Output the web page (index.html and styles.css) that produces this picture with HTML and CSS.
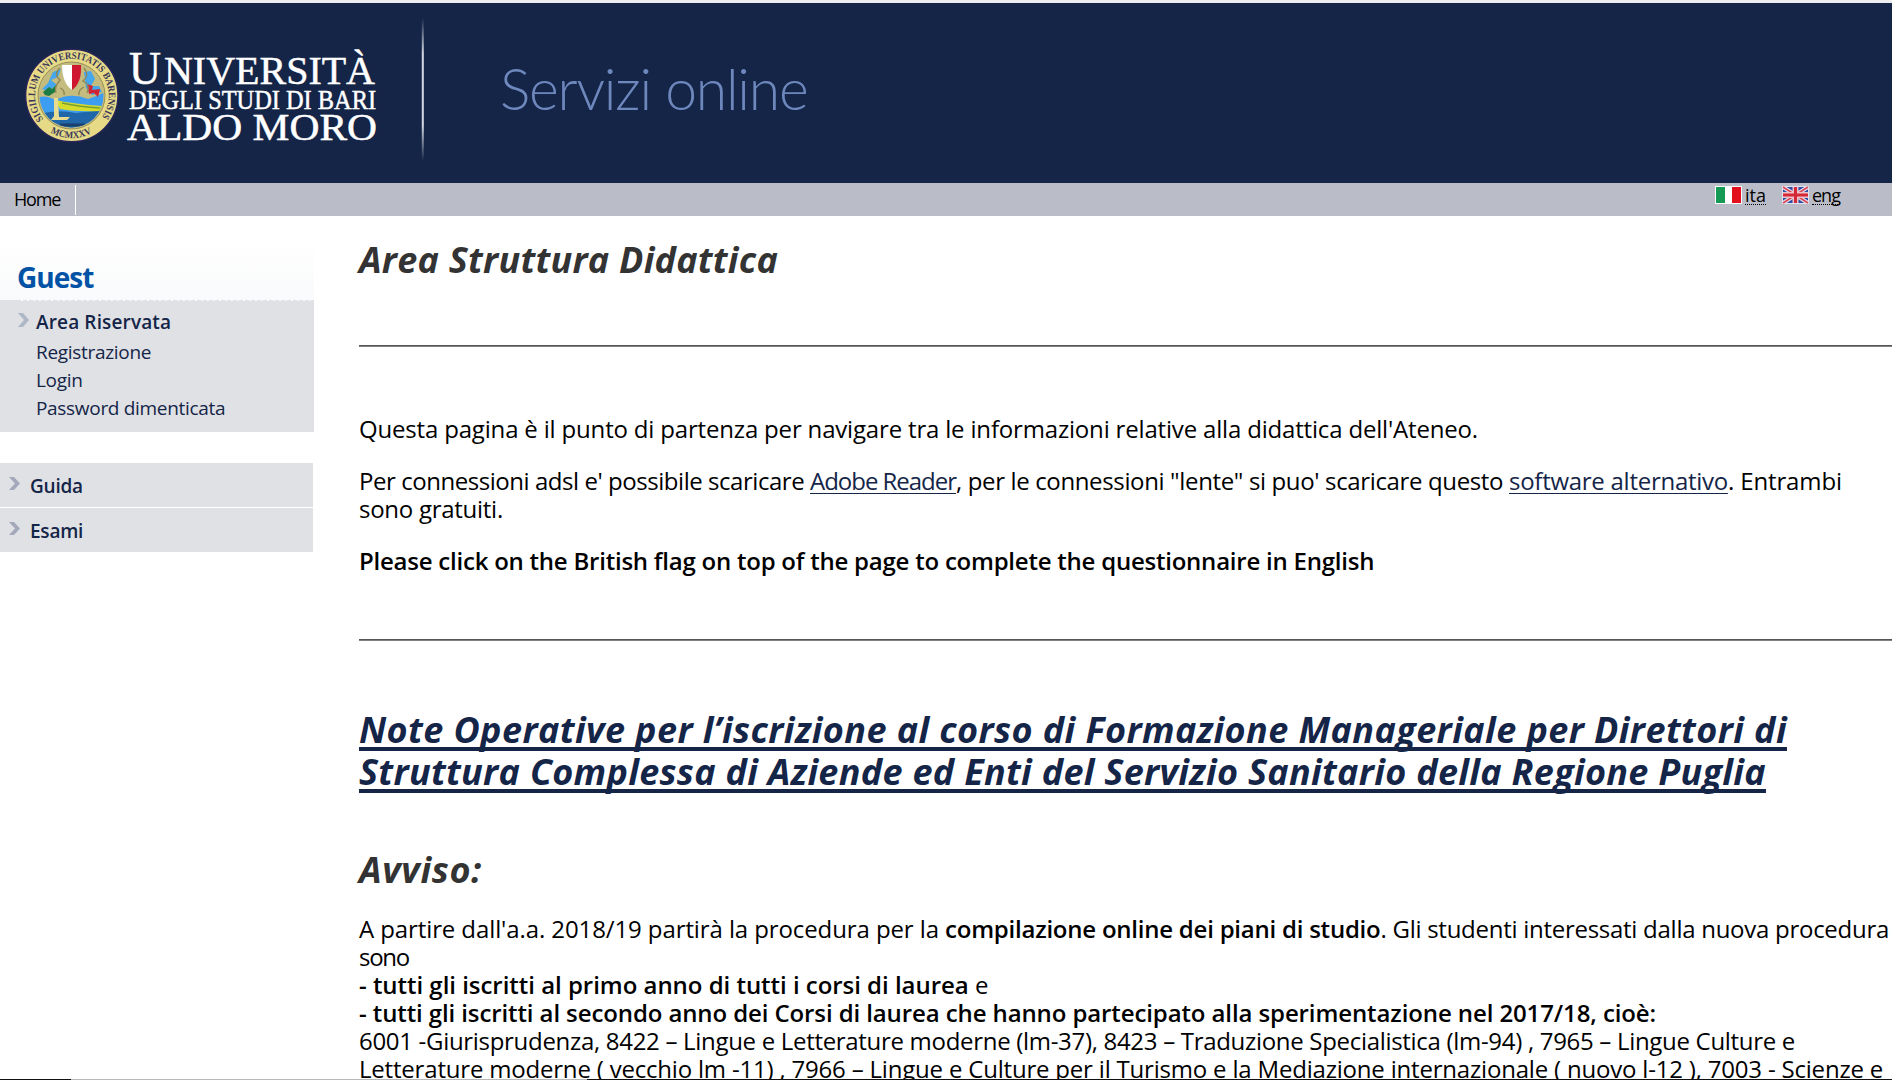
FILE: index.html
```html
<!DOCTYPE html>
<html lang="it">
<head>
<meta charset="utf-8">
<title>Servizi online</title>
<link rel="stylesheet" href="styles.css">
</head>
<body>
<header class="banner">
  <svg class="logo" width="430" height="180" viewBox="0 3 430 180">
    <defs>
      <path id="ring" d="M43.500 119 A36.800 36.800 0 1 1 100.300 119"/>
      <path id="ringBottom" d="M50.500 132.500 A43 43 0 0 0 93.100 132.500"/>
      <linearGradient id="fade" x1="0" y1="0" x2="0" y2="1">
        <stop offset="0" stop-color="#d5d8e0" stop-opacity="0"/>
        <stop offset=".25" stop-color="#d5d8e0"/>
        <stop offset=".75" stop-color="#d5d8e0"/>
        <stop offset="1" stop-color="#d5d8e0" stop-opacity="0"/>
      </linearGradient>
      <clipPath id="disc"><circle cx="71.500" cy="95.500" r="32"/></clipPath>
    </defs>
    <circle cx="71.800" cy="95.500" r="46.200" fill="#e6da86" stroke="#2a2558" stroke-width="1.500"/>
    <circle cx="71.500" cy="95.500" r="33.500" fill="#c4bb7e" stroke="#98905a" stroke-width="1"/>
    <g clip-path="url(#disc)">
      <path d="M39 97 Q48 95 55 100 Q71 92 88 99 Q96 97 105 92 V130 H39Z" fill="#3d9df0"/>
      <path d="M39 114 Q58 109 76 113 L104 110 V130 H39Z" fill="#1f67a8"/>
      <path d="M55 100 Q75 104 102 106 L100 111 Q76 112 60 109Z" fill="#d6dc2b"/>
      <path d="M62 103 Q80 107 100 108" stroke="#779f32" stroke-width="1.500" fill="none"/>
      <path d="M54 98 H58 L59 117 H70 L67 120 H51 L54 116Z" fill="#e8dc92"/>
      <path d="M60 125 H85" stroke="#1b3f6b" stroke-width="3"/>
      <path d="M53 72 L61 69 L58 77 L51 80 L57 85 L48 91 L42 89 L48 83Z M84 72 L91 71 L95 79 L91 86 L99 86 L102 92 L92 95 L86 88Z" fill="#45a7ec"/>
      <path d="M43 92 l6-5 3 2 4-4-1 7-6 4-4-1z" fill="#1d7b46"/>
      <path d="M87 84 l6 2-1 4 8-1-2 8-4-4-5 1z" fill="#cf2436"/>
    </g>
    <path d="M60 68 q-7 6 0 12 q-6 7-4 13 M84 68 q6 7-1 13 q8 4 4 12 M60 88 q5 2 4 7 M84 87 q-6 3-5 8" fill="none" stroke="#8d8554" stroke-width="1.300"/>
    <path d="M62 65 H72 V90 Q62 83 62 65Z" fill="#fff"/>
    <path d="M72 65 H81 Q82 83 72 90Z" fill="#cf1731"/>
    <text class="ring-text"><textPath href="#ring" textLength="163" lengthAdjust="spacingAndGlyphs">SIGILLUM UNIVERSITATIS BARENSIS</textPath></text>
    <text class="ring-text"><textPath href="#ringBottom" textLength="43" lengthAdjust="spacingAndGlyphs">MCMXXV</textPath></text>
    <text class="logo-text" y="84"><tspan x="129" font-size="46" textLength="32" lengthAdjust="spacingAndGlyphs">U</tspan><tspan x="164" font-size="41" textLength="211" lengthAdjust="spacingAndGlyphs">NIVERSITÀ</tspan></text>
    <text class="logo-text" x="129" y="109" font-size="27" textLength="247" lengthAdjust="spacingAndGlyphs">DEGLI STUDI DI BARI</text>
    <text class="logo-text" x="127" y="139.500" font-size="37" textLength="250" lengthAdjust="spacingAndGlyphs">ALDO MORO</text>
    <rect x="421.800" y="18" width="2" height="143" fill="url(#fade)"/>
  </svg>
  <div class="service">Servizi online</div>
</header>
<nav class="menu">
  <a class="home">Home</a>
  <div class="langs">
    <a class="lang"><svg width="27" height="18" viewBox="0 0 27 18"><path fill="#fff" d="M0 0h27v18H0z"/><path fill="#159a55" d="M1 1h9v16H1z"/><path fill="#e2101c" d="M17 1h9v16h-9z"/></svg><abbr>ita</abbr></a>
    <a class="lang eng"><svg width="27" height="18" viewBox="0 0 27 18"><path fill="#dfe3f2" d="M0 0h27v18H0z"/><path fill="#2d4da3" d="M1 1h25v16H1z"/><path d="M1 1l25 16M26 1L1 17" stroke="#e6e0ee" stroke-width="4"/><path d="M1 1l25 16M26 1L1 17" stroke="#dc4450" stroke-width="1.500"/><path d="M13.500 1v16M1 9h25" stroke="#eec0c8" stroke-width="6"/><path d="M13.500 1v16M1 9h25" stroke="#d42a37" stroke-width="3"/></svg><abbr>eng</abbr></a>
  </div>
</nav>
<div class="page">
  <aside class="side">
    <h2 class="guest">Guest</h2>
    <ul class="reserved">
      <li class="head"><svg class="chev" width="12" height="15" viewBox="0 0 12 15"><path d="M0 0h5l6 7-6 7H0l6-7z" fill="#adb7c8"/></svg>Area Riservata</li>
      <li>Registrazione</li>
      <li>Login</li>
      <li>Password dimenticata</li>
    </ul>
    <ul class="sections">
      <li><svg class="chev" width="12" height="14" viewBox="0 0 12 14"><path d="M0 0h5l6 6.500-6 6.500H0l6-6.500z" fill="#a3a9ba"/></svg>Guida</li>
      <li><svg class="chev" width="12" height="14" viewBox="0 0 12 14"><path d="M0 0h5l6 6.500-6 6.500H0l6-6.500z" fill="#a3a9ba"/></svg>Esami</li>
    </ul>
  </aside>
  <main class="content">
    <h1 class="title">Area Struttura Didattica</h1>
    <hr>
    <p class="intro">Questa pagina è il punto di partenza per navigare tra le informazioni relative alla didattica dell'Ateneo.</p>
    <p class="readers"><span class="lead">Per connessioni adsl e' possibile scaricare </span><a class="adobe">Adobe Reader</a><span class="slow">, per le connessioni "lente" si puo' scaricare questo </span><a>software alternativo</a><span class="both">. Entrambi</span><br>sono gratuiti.</p>
    <p class="english"><b>Please click on the British flag on top of the page to complete the questionnaire in English</b></p>
    <hr>
    <h1 class="notes"><a>Note Operative per l’iscrizione al corso di Formazione Manageriale per Direttori di</a><br><a class="second">Struttura Complessa di Aziende ed Enti del Servizio Sanitario della Regione Puglia</a></h1>
    <h1 class="notice">Avviso:</h1>
    <p><span class="from">A partire dall'a.a. 2018/19 partirà la procedura per la </span><b class="plans">compilazione online dei piani di studio</b><span class="students">. Gli studenti interessati dalla nuova procedura</span><br><span class="are">sono</span><br><b class="first-year">- tutti gli iscritti al primo anno di tutti i corsi di laurea </b>e<br><b class="second-year">- tutti gli iscritti al secondo anno dei Corsi di laurea che hanno partecipato alla sperimentazione nel 2017/18, cioè:</b><br><span class="courses">6001 -Giurisprudenza, 8422 – Lingue e Letterature moderne (lm-37), 8423 – Traduzione Specialistica (lm-94) , 7965 – Lingue Culture e</span><br><span class="courses-more">Letterature moderne ( vecchio lm -11) , 7966 – Lingue e Culture per il Turismo e la Mediazione internazionale ( nuovo l-12 ), 7003 - Scienze e</span></p>
  </main>
</div>
<div class="edge"></div>
</body>
</html>
```
FILE: styles.css
```css
* { box-sizing: border-box; }
body { margin: 0; height: 1080px; overflow: hidden; position: relative; background: #fff; color: #000; font-family: "Open Sans", "Noto Sans", sans-serif; white-space: nowrap; }

.banner { height: 183px; border-top: 3px solid #eceef0; background: #142548; display: flex; }
.logo { display: block; flex: none; }
.logo-text { font-family: "Liberation Serif", serif; fill: #fff; stroke: #fff; stroke-width: .5px; }
.ring-text { font: bold 10px "Liberation Serif", serif; fill: #39355a; }
.service { margin-left: 70px; padding-top: 55px; font-family: Lato, sans-serif; font-size: 57px; line-height: 60px; font-weight: 300; letter-spacing: -1.2px; color: #6e88bd; }

.menu { height: 33px; background: #babdc8; display: flex; justify-content: space-between; }
.home { width: 76px; height: 30px; margin-top: 2px; padding-left: 14px; border-right: 1px solid #fff; font-size: 18px; line-height: 28px; letter-spacing: -1.2px; }
.langs { display: flex; gap: 16px; padding: 3px 52px 0 0; }
.lang { display: flex; gap: 3px; font-size: 18px; }
.lang abbr { height: 19px; line-height: 19px; border-bottom: 1px dotted #000; }
.eng abbr { letter-spacing: -.97px; }

.page { display: flex; }
.side { width: 314px; flex: none; }
.guest { margin: 24px 0 0; height: 60px; padding: 18px 0 0 17px; font-size: 28px; line-height: 38px; font-weight: 700; letter-spacing: -.95px; color: #0253a6; background: linear-gradient(#fff, #f9fafb); }
ul { list-style: none; margin: 0; padding: 0; color: #142548; }
.reserved { height: 132px; background: repeating-linear-gradient(90deg, #e0e1e5 0 4px, #fafafa 4px 6px) 17px 0 / 100% 1px no-repeat, #e0e1e5; padding: 8px 0 0 36px; font-size: 19px; line-height: 28px; letter-spacing: -.31px; }
.head { display: flex; margin: 0 0 2px -18px; font-weight: 600; letter-spacing: .14px; }
.head .chev { margin: 5px 6px 0 0; }
.sections { width: 313px; margin-top: 31px; display: grid; gap: 1px; font-size: 19px; font-weight: 600; letter-spacing: -.23px; }
.sections li { height: 44px; display: flex; padding: 8px 0 0 9px; line-height: 30px; background: #e0e1e5; }
.sections .chev { margin: 6px 9px 0 0; }

.content { flex: 1; min-width: 0; padding: 22px 0 0 45px; font-size: 24px; line-height: 28px; letter-spacing: -.27px; }
.content p { margin: 0 0 24px; }
.content b { font-weight: 600; letter-spacing: -.23px; }
.content h1 { margin: 0; font-size: 36px; line-height: 42px; font-weight: 700; font-style: italic; color: #333; }
.content hr { height: 2px; border: 0; margin: 66px 0 68px; background: linear-gradient(#555 50%, #808080 50%); }
.content p + hr { margin: 64px 0 67px; }
.content a { color: #142548; text-decoration: underline 1px; text-underline-offset: 3px; text-decoration-skip-ink: none; }
.content .title { margin-top: 1px; margin-bottom: -2px; letter-spacing: .238px; }
.content .intro { letter-spacing: -.176px; }
.lead { letter-spacing: -.454px; }
.content .adobe { letter-spacing: -1.025px; }
.slow { letter-spacing: -.359px; }
.both { letter-spacing: -.127px; }
.content .notes { padding-top: 1px; }
.content .notes a { letter-spacing: .406px; text-decoration-thickness: 4px; text-underline-offset: 4px; }
.content .notes .second { letter-spacing: .297px; }
.content .notice { margin: 56px 0 24px; letter-spacing: .638px; }
.from { letter-spacing: -.1px; }
.are { letter-spacing: -1.3px; }
.content .first-year { letter-spacing: -.03px; }
.content .second-year { letter-spacing: -.105px; }
.courses { letter-spacing: -.305px; }
.courses-more { letter-spacing: -.194px; }

.edge { position: absolute; left: 0; top: 1079px; width: 100%; height: 1px; background: linear-gradient(90deg, #111 71px, #b8b8b8 71px 587px, #111 587px); }
```
